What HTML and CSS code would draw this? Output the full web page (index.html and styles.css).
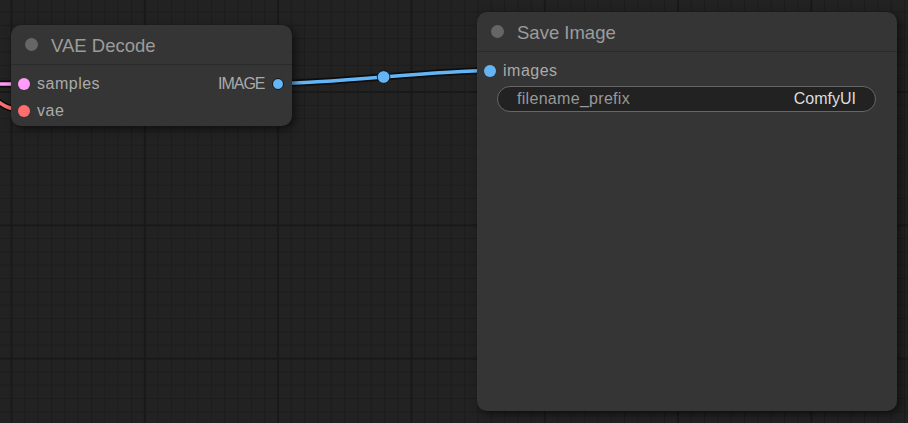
FILE: index.html
```html
<!DOCTYPE html>
<html lang="en">
<head>
<meta charset="utf-8">
<title>ComfyUI graph</title>
<link rel="stylesheet" href="styles.css">
</head>
<body>
<div class="canvas">
  <svg class="links" width="908" height="423" viewBox="0 0 908 423">
    <path class="link-shadow" d="M -60 84 L 24 84"/>
    <path class="link link-latent" d="M -60 84 L 24 84"/>
    <path class="link-shadow" d="M -22 86 C 0 103, 5 110, 24 110"/>
    <path class="link link-vae" d="M -22 86 C 0 103, 5 110, 24 110"/>
    <path class="link-shadow" d="M 278 83.5 C 331 83.5, 436 70.5, 489.5 70.5"/>
    <path class="link link-image" d="M 278 83.5 C 331 83.5, 436 70.5, 489.5 70.5"/>
    <circle class="link-mid" cx="383.6" cy="77" r="6.3"/>
  </svg>

  <div class="node node-vae">
    <div class="title"><span class="title-dot"></span><span class="title-text">VAE Decode</span></div>
    <div class="body">
      <div class="row">
        <div class="slot slot-in"><span class="dot dot-latent"></span><span class="label">samples</span></div>
        <div class="slot slot-out"><span class="label label-caps">IMAGE</span><span class="dot dot-image dot-linked"></span></div>
      </div>
      <div class="row">
        <div class="slot slot-in"><span class="dot dot-vae"></span><span class="label">vae</span></div>
      </div>
    </div>
  </div>

  <div class="node node-save">
    <div class="title"><span class="title-dot"></span><span class="title-text">Save Image</span></div>
    <div class="body">
      <div class="row">
        <div class="slot slot-in"><span class="dot dot-image"></span><span class="label">images</span></div>
      </div>
      <div class="widget">
        <span class="widget-label">filename_prefix</span>
        <span class="widget-value">ComfyUI</span>
      </div>
    </div>
  </div>
</div>
</body>
</html>
```

FILE: styles.css
```css
html, body {
  margin: 0;
  padding: 0;
}

body {
  width: 908px;
  height: 423px;
  overflow: hidden;
  font-family: "Liberation Sans", Arial, sans-serif;
  background-color: #222222;
  background-image:
    linear-gradient(to right, #191919 2px, transparent 2px),
    linear-gradient(to bottom, #191919 2px, transparent 2px),
    linear-gradient(to right, #1c1c1c 1px, transparent 1px),
    linear-gradient(to bottom, #1c1c1c 1px, transparent 1px);
  background-size:
    133.333px 100%,
    100% 133.333px,
    13.3333px 100%,
    100% 13.3333px;
  background-position:
    10.5px 0,
    0 91px,
    11px 0,
    0 11.5px;
}

.canvas {
  position: relative;
  width: 908px;
  height: 423px;
}

.links {
  position: absolute;
  left: 0;
  top: 0;
}

.link-shadow {
  fill: none;
  stroke: #0d0d0d;
  stroke-width: 7;
}

.link {
  fill: none;
  stroke-width: 3.6;
}

.link-latent { stroke: #ff9cf9; }
.link-vae { stroke: #ff6e6e; }
.link-image { stroke: #64b5f6; }

.link-mid {
  fill: #64b5f6;
  stroke: #0d0d0d;
  stroke-width: 0.8;
}

.node {
  position: absolute;
  background: #353535;
  border-radius: 10px;
  box-shadow: 3px 3px 8px rgba(0, 0, 0, 0.55);
  display: flex;
  flex-direction: column;
}

.node-vae {
  left: 11px;
  top: 25px;
  width: 281px;
  height: 101px;
}

.node-save {
  left: 477px;
  top: 12px;
  width: 420px;
  height: 399px;
}

.title {
  height: 40px;
  box-sizing: border-box;
  border-bottom: 1px solid #2b2b2b;
  display: flex;
  align-items: center;
  gap: 13.5px;
  padding: 2px 0 0 13.5px;
  font-size: 18.5px;
  color: #9c9c9c;
}

.title-dot {
  width: 13px;
  height: 13px;
  margin-top: -2px;
  border-radius: 50%;
  background: #666666;
  flex: none;
}

.body {
  padding-top: 6px;
  display: flex;
  flex-direction: column;
}

.row {
  height: 26.7px;
  display: flex;
  align-items: center;
  justify-content: space-between;
  font-size: 16px;
  color: #aaaaaa;
}

.slot {
  display: flex;
  align-items: center;
}

.slot-in {
  padding-left: 7px;
  gap: 7px;
}

.slot-out {
  padding-right: 8px;
  gap: 7.5px;
}

.label {
  letter-spacing: 0.5px;
}

.label-caps {
  letter-spacing: -1px;
}

.dot {
  width: 12px;
  height: 12px;
  border-radius: 50%;
  box-sizing: border-box;
  flex: none;
}

.dot-latent { background: #ff9cf9; }
.dot-vae { background: #ff6e6e; }
.dot-image { background: #64b5f6; }

.dot-linked {
  border: 1.5px solid #111111;
}

.widget {
  margin: 1.7px 21px 0 20px;
  height: 26px;
  box-sizing: border-box;
  border: 1px solid #666666;
  border-radius: 13px;
  background: #222222;
  display: flex;
  align-items: center;
  justify-content: space-between;
  padding: 0 19px;
  font-size: 16px;
  letter-spacing: 0.3px;
}

.widget-label { color: #999999; }
.widget-value { color: #dddddd; letter-spacing: 0; }
```
